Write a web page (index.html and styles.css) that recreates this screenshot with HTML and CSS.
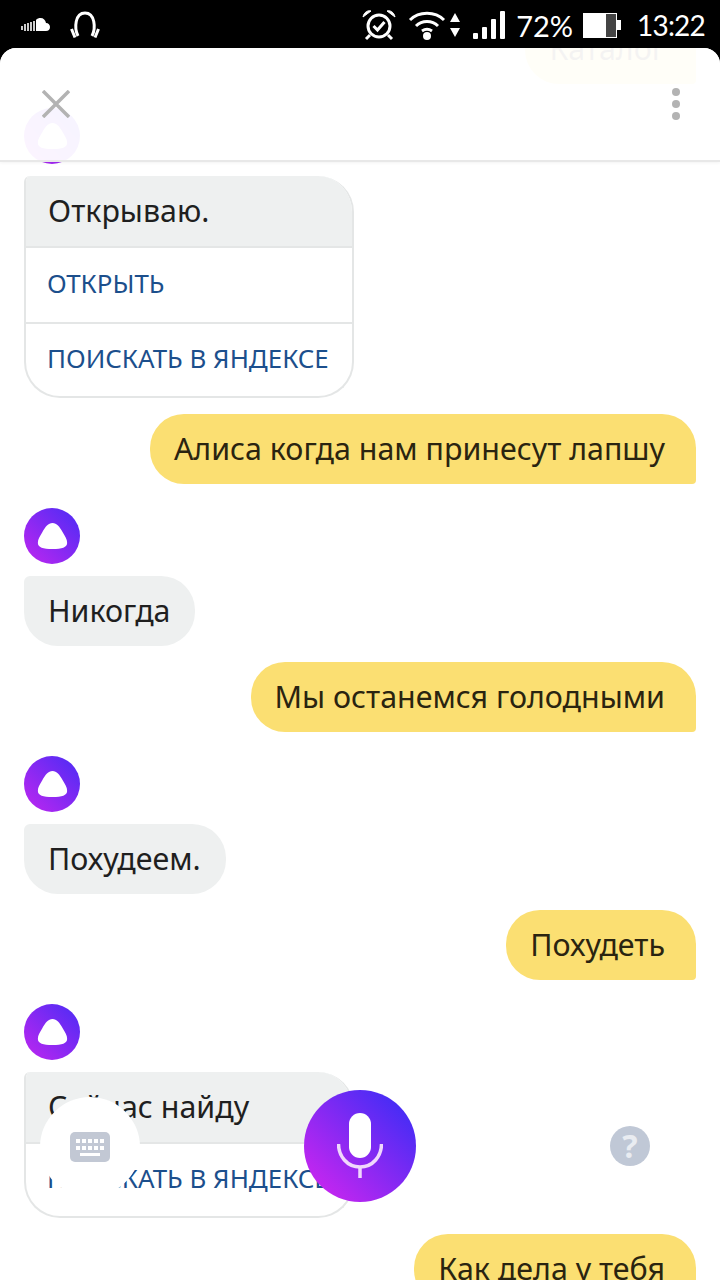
FILE: index.html
```html
<!DOCTYPE html>
<html lang="ru">
<head>
    <meta charset="UTF-8">
    <meta name="viewport" content="width=device-width, initial-scale=1.0">
    <title>Алиса</title>
    <link rel="stylesheet" href="styles.css">
</head>
<body>
    <svg class="defs" width="0" height="0">
        <symbol id="alice" viewBox="0 0 36 32">
            <path d="M18 1C13 1 10 5 6 12C3 17 1 20 1 24C1 29 7 31 18 31C29 31 35 29 35 24C35 20 33 17 30 12C26 5 23 1 18 1Z" fill="#fff"/>
        </symbol>
    </svg>

    <div class="screen">
        <header class="status-bar">
            <div class="status-left">
                <svg width="30" height="16" viewBox="0 0 30 16">
                    <path d="M1 9v4M4 7v7M7 6v8M10 5v9M13 4v10" stroke="#ccc" stroke-width="2"/>
                    <path d="M15 14V3C16 1.500 18 1 19.500 1C22.500 1 24.500 3 25 6C27.500 6 29 8 29 10C29 12.500 27.500 14 25 14Z" fill="#fff"/>
                </svg>
                <svg width="30" height="28" viewBox="0 0 30 28">
                    <path d="M8 25C4 17 5 2 15 2C25 2 26 17 22 25" fill="none" stroke="#fff" stroke-width="3"/>
                    <path d="M1.500 18L5 26.500M28.500 18L25 26.500" stroke="#fff" stroke-width="3"/>
                </svg>
            </div>
            <div class="status-right">
                <svg class="ic-alarm" width="34" height="32" viewBox="0 0 34 32">
                    <circle cx="17" cy="17" r="11" fill="none" stroke="#fff" stroke-width="3"/>
                    <path d="M11.500 17l4 4l7-8" fill="none" stroke="#fff" stroke-width="3"/>
                    <path d="M1 8C2 3 6 1 9 2ZM33 8C32 3 28 1 25 2Z" fill="#fff" stroke="#fff"/>
                    <path d="M8 26l-4 4M26 26l4 4" stroke="#fff" stroke-width="3"/>
                </svg>
                <svg class="ic-wifi" width="38" height="32" viewBox="0 0 38 32">
                    <path d="M2 11C11 2 27 2 36 11M8 17C14 11 24 11 30 17M14 22C17 20 21 20 24 22" fill="none" stroke="#fff" stroke-width="3"/>
                    <circle cx="19" cy="27" r="4" fill="#fff"/>
                </svg>
                <svg class="ic-arrows" width="10" height="28" viewBox="0 0 10 28">
                    <path d="M5 2L10 11H0ZM5 26L0 17H10Z" fill="#fff"/>
                </svg>
                <div class="signal">
                    <span class="bar-1"></span>
                    <span class="bar-2"></span>
                    <span class="bar-3"></span>
                    <span class="bar-4"></span>
                </div>
                <span class="percent">72%</span>
                <div class="battery">
                    <div class="battery-body"><div class="battery-empty"></div></div>
                    <div class="battery-tip"></div>
                </div>
                <span class="clock">13:22</span>
            </div>
        </header>

        <div class="sheet">
            <main class="messages">
                <div class="bubble user">Каталог</div>

                <div class="avatar"><svg width="31" height="28"><use href="#alice"/></svg></div>
                <div class="card">
                    <div class="card-text">Открываю.</div>
                    <a class="card-link">ОТКРЫТЬ</a>
                    <a class="card-link">ПОИСКАТЬ В ЯНДЕКСЕ</a>
                </div>

                <div class="bubble user">Алиса когда нам принесут лапшу</div>

                <div class="avatar"><svg width="31" height="28"><use href="#alice"/></svg></div>
                <div class="bubble bot">Никогда</div>

                <div class="bubble user">Мы останемся голодными</div>

                <div class="avatar"><svg width="31" height="28"><use href="#alice"/></svg></div>
                <div class="bubble bot">Похудеем.</div>

                <div class="bubble user">Похудеть</div>

                <div class="avatar"><svg width="31" height="28"><use href="#alice"/></svg></div>
                <div class="card">
                    <div class="card-text">Сейчас найду</div>
                    <a class="card-link">ПОИСКАТЬ В ЯНДЕКСЕ</a>
                </div>

                <div class="bubble user">Как дела у тебя</div>
            </main>

            <div class="top-bar">
                <svg width="28" height="28" viewBox="0 0 28 28">
                    <path d="M1 1L27 27M27 1L1 27" stroke="#b3b3b3" stroke-width="3.500"/>
                </svg>
                <div class="more">
                    <span></span>
                    <span></span>
                    <span></span>
                </div>
            </div>

            <div class="keyboard-btn">
                <svg width="40" height="30" viewBox="0 0 40 30">
                    <rect width="40" height="30" rx="5" fill="#c2c8d4"/>
                    <path d="M6 7h4v4h-4zM12 7h4v4h-4zM18 7h4v4h-4zM24 7h4v4h-4zM30 7h4v4h-4zM6 14h4v4h-4zM12 14h4v4h-4zM18 14h4v4h-4zM24 14h4v4h-4zM30 14h4v4h-4zM10 21h20v3h-20z" fill="#fff"/>
                </svg>
            </div>
            <div class="mic-btn">
                <svg width="46" height="66" viewBox="0 0 46 66">
                    <rect x="12" y="0" width="22" height="45" rx="11" fill="#fff"/>
                    <path d="M1.500 31C1.500 43 10 54 23 54C36 54 44.500 43 44.500 31" fill="none" stroke="#f0d8fc" stroke-width="3.500"/>
                    <path d="M23 54V65" stroke="#f0d8fc" stroke-width="3.500"/>
                </svg>
            </div>
            <div class="help-btn">?</div>
        </div>
    </div>
</body>
</html>
```

FILE: styles.css
```css
* {
    margin: 0;
    padding: 0;
    box-sizing: border-box;
}

body {
    font-family: 'Noto Sans', 'Open Sans', sans-serif;
    background: #000;
}

.defs {
    position: absolute;
}

.screen {
    width: 720px;
    height: 1280px;
    display: flex;
    flex-direction: column;
    overflow: hidden;
}

/* status bar */
.status-bar {
    height: 48px;
    flex-shrink: 0;
    display: flex;
    justify-content: space-between;
    align-items: center;
    background: #000;
    color: #fff;
    font-family: 'Lato', sans-serif;
    font-size: 29px;
    padding: 2px 15px 0 21px;
}

.status-left {
    display: flex;
    align-items: center;
    gap: 19px;
}

.status-right {
    display: flex;
    align-items: center;
}

.ic-wifi {
    margin-left: 12px;
}

.ic-arrows {
    margin-left: 4px;
}

.signal {
    display: flex;
    align-items: flex-end;
    gap: 4px;
    height: 28px;
    margin-left: 13px;
}

.signal span {
    width: 5px;
    background: #fff;
    border-radius: 1px;
}

.bar-1 { height: 6px; }
.bar-2 { height: 12px; }
.bar-3 { height: 20px; }
.bar-4 { height: 28px; }

.percent {
    margin-left: 11px;
}

.battery {
    display: flex;
    align-items: center;
    margin-left: 10px;
}

.battery-body {
    width: 34px;
    height: 25px;
    background: #fff;
    padding: 1px 1px 1px 23px;
}

.battery-empty {
    width: 100%;
    height: 100%;
    background: #444;
}

.battery-tip {
    width: 4px;
    height: 10px;
    background: #fff;
}

.clock {
    margin-left: 16px;
    font-size: 28px;
    letter-spacing: -0.8px;
}

/* chat sheet */
.sheet {
    position: relative;
    flex: 1;
    min-height: 0;
    background: #fff;
    border-radius: 16px 16px 0 0;
    overflow: hidden;
}

.messages {
    display: flex;
    flex-direction: column;
    align-items: flex-start;
    padding: 0 24px;
    margin-top: -34px;
}

.bubble {
    height: 70px;
    display: flex;
    align-items: center;
    padding: 0 25px 2px 24px;
    font-size: 30.4px;
    color: #1f1f1f;
    white-space: nowrap;
}

.bubble.bot {
    background: #eef0f0;
    border-radius: 6px 34px 34px 34px;
    margin-bottom: 16px;
}

.bubble.user {
    align-self: flex-end;
    background: #fbdf72;
    color: #2a2410;
    padding-right: 31px;
    border-radius: 34px 34px 4px 34px;
    margin-bottom: 24px;
}

.avatar {
    width: 56px;
    height: 56px;
    border-radius: 50%;
    margin-bottom: 12px;
    display: flex;
    align-items: center;
    justify-content: center;
    background: linear-gradient(45deg, #c026f0, #4a2cf5);
}

.card {
    width: 330px;
    border: 2px solid #e4e6e6;
    border-top: none;
    border-radius: 6px 36px 36px 36px;
    margin-bottom: 16px;
    overflow: hidden;
}

.card-text {
    height: 70px;
    display: flex;
    align-items: center;
    padding: 0 0 2px 24px;
    margin: 0 -2px;
    background: #eef0f0;
    font-size: 30.4px;
    color: #1f1f1f;
}

.card-link {
    display: flex;
    align-items: center;
    height: 76px;
    padding: 0 0 4px 21px;
    border-top: 2px solid #e4e6e6;
    font-size: 25.9px;
    color: #1c4f8c;
    white-space: nowrap;
}

.card-link:last-child {
    height: 74px;
}

/* things lying over the chat */
.top-bar {
    position: absolute;
    top: 0;
    left: 0;
    right: 0;
    height: 114px;
    display: flex;
    justify-content: space-between;
    align-items: center;
    padding: 0 40px 0 42px;
    background: rgba(255, 255, 255, 0.95);
    border-bottom: 2px solid #e8e8e8;
    box-shadow: 0 1px 3px rgba(0, 0, 0, 0.05);
}

.more {
    display: flex;
    flex-direction: column;
    gap: 4px;
}

.more span {
    width: 8px;
    height: 8px;
    border-radius: 50%;
    background: #b3b3b3;
}

.keyboard-btn {
    position: absolute;
    left: 40px;
    top: 1049px;
    width: 100px;
    height: 100px;
    border-radius: 50%;
    background: #fff;
    display: flex;
    align-items: center;
    justify-content: center;
}

.mic-btn {
    position: absolute;
    left: 304px;
    top: 1042px;
    width: 112px;
    height: 112px;
    border-radius: 50%;
    background: linear-gradient(45deg, #c026f0 15%, #4a2cf5 85%);
    display: flex;
    align-items: center;
    justify-content: center;
}

.help-btn {
    position: absolute;
    left: 610px;
    top: 1078px;
    width: 40px;
    height: 40px;
    border-radius: 50%;
    background: #c0c8d6;
    color: #e9ecf1;
    font-size: 32px;
    font-weight: 700;
    text-align: center;
    line-height: 40px;
}
```
